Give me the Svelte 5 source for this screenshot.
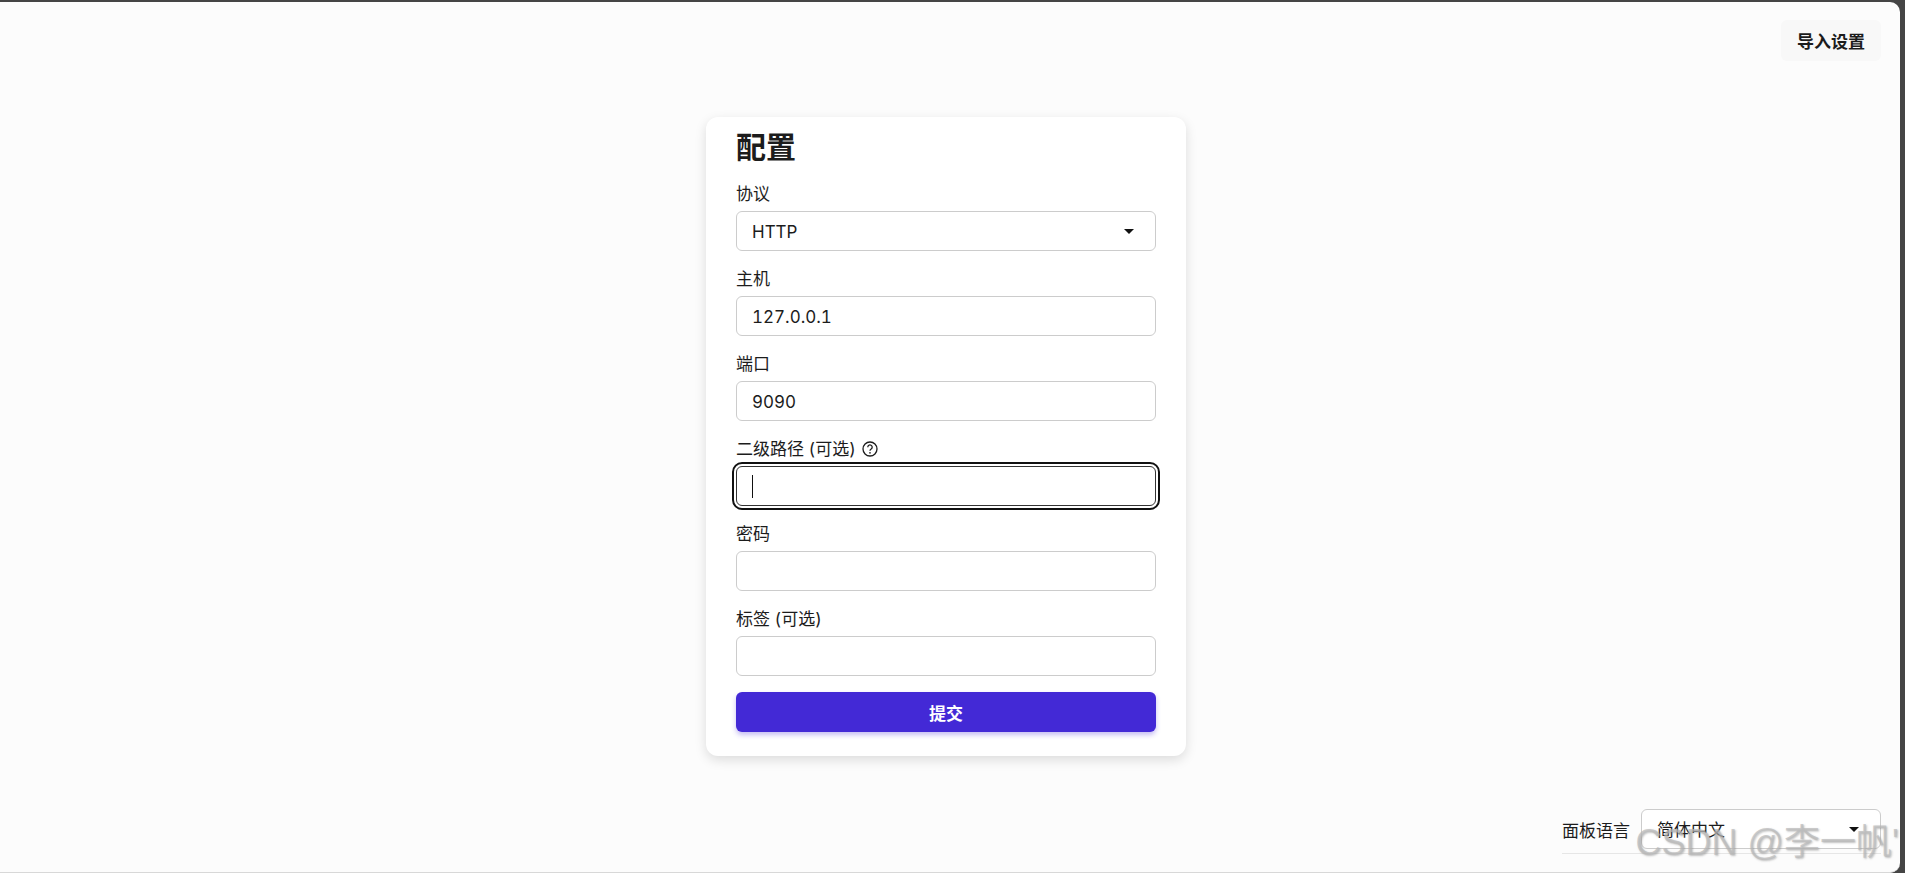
<script lang="ts">
  const fields = [
    { label: '主机', value: '127.0.0.1' },
    { label: '端口', value: '9090' }
  ]
</script>

<div class="frame">
  <div class="page">
    <header>
      <button class="import">导入设置</button>
    </header>

    <main>
      <form class="card" onsubmit={(e) => e.preventDefault()}>
        <h2>配置</h2>

        <div class="field">
          <span class="label">协议</span>
          <div class="select">
            <span>HTTP</span>
            <i class="caret"></i>
          </div>
        </div>

        {#each fields as f}
          <div class="field">
            <span class="label">{f.label}</span>
            <div class="input">{f.value}</div>
          </div>
        {/each}

        <div class="field">
          <span class="label"><span>二级路径 (可选)</span><svg class="help" width="16" height="16" viewBox="0 0 16 16" fill="none" stroke="currentColor">
              <circle cx="8" cy="8" r="7" stroke-width="1.3" />
              <path d="M5.8 6.2a2.2 2.2 0 1 1 3.4 1.8c-.8.5-1.2.9-1.2 1.8" stroke-width="1.3" />
              <circle cx="8" cy="11.8" r=".85" fill="currentColor" stroke="none" />
            </svg></span>
          <div class="input focused"><i class="cursor"></i></div>
        </div>

        <div class="field">
          <span class="label">密码</span>
          <div class="input"></div>
        </div>

        <div class="field">
          <span class="label">标签 (可选)</span>
          <div class="input"></div>
        </div>

        <button class="submit" type="submit">提交</button>
      </form>
    </main>

    <footer>
      <div class="lang">
        <span>面板语言</span>
        <div class="select">
          <span>简体中文</span>
          <i class="caret"></i>
        </div>
      </div>
    </footer>

    <div class="watermark">CSDN @李一帆'</div>
  </div>
</div>

<style>
  :global(body) {
    background: #454545;
    overflow: hidden;
  }

  .frame {
    height: 873px;
    padding: 2px 5px 0 0;
    box-sizing: border-box;
    font-family: Inter, "Noto Sans CJK SC", sans-serif;
    font-size: 17px;
    font-feature-settings: "tnum";
    color: #1c1c1c;
  }

  .page {
    position: relative;
    height: 100%;
    box-sizing: border-box;
    background: #fcfcfc;
    border-bottom: 1px solid #d8d8d8;
    border-top-right-radius: 10px;
    border-bottom-right-radius: 10px;
    display: flex;
    flex-direction: column;
    overflow: hidden;
  }

  header {
    display: flex;
    justify-content: flex-end;
    padding: 18px 19px 0 0;
  }

  .import {
    width: 100px;
    height: 41px;
    border: none;
    border-radius: 6px;
    background: #f8f8f8;
    color: #1c1c1c;
    font: inherit;
    font-weight: 700;
  }

  main {
    padding: 56px 0 0 706px;
  }

  .card {
    width: 480px;
    height: 639px;
    box-sizing: border-box;
    padding: 0 30px;
    background: #fff;
    border-radius: 12px;
    box-shadow: 0 4px 12px rgba(0, 0, 0, 0.13);
  }

  h2 {
    margin: 0;
    height: 60px;
    font-size: 30px;
    line-height: 60px;
    font-weight: 700;
  }

  .field {
    display: flex;
    flex-direction: column;
    height: 85px;
  }

  .label {
    display: flex;
    align-items: center;
    gap: 6px;
    height: 34px;
    line-height: 34px;
  }

  .help {
    color: #1c1c1c;
  }

  .input, .select {
    height: 40px;
    box-sizing: border-box;
    border: 1px solid #ccc;
    border-radius: 6px;
    background: #fff;
    padding: 1px 15px 0;
    line-height: 38px;
  }

  .select {
    display: flex;
    align-items: center;
    justify-content: space-between;
  }

  .caret {
    width: 0;
    height: 0;
    margin-right: 6px;
    border-left: 5px solid transparent;
    border-right: 5px solid transparent;
    border-top: 5px solid #111;
  }

  .focused {
    outline: 2px solid #111;
    outline-offset: 2px;
    border-color: #333;
    display: flex;
    align-items: center;
  }

  .cursor {
    width: 1px;
    height: 23px;
    background: #111;
  }

  .submit {
    display: block;
    width: 100%;
    height: 40px;
    margin-top: 5px;
    border: none;
    border-radius: 6px;
    background: #4329d6;
    color: #fff;
    font: inherit;
    font-weight: 700;
    box-shadow: 0 3px 5px rgba(67, 41, 214, 0.3);
  }

  footer {
    margin-top: auto;
    display: flex;
    justify-content: flex-end;
    padding: 0 19px 18px 0;
  }

  .lang {
    display: flex;
    align-items: center;
    gap: 11px;
    padding-bottom: 4px;
    border-bottom: 1px solid #e6e6e6;
  }

  .lang .select {
    width: 240px;
  }

  .watermark {
    position: absolute;
    right: 1px;
    bottom: 9px;
    font-family: "Liberation Sans", "Noto Sans CJK SC", sans-serif;
    font-size: 36px;
    line-height: 40px;
    color: rgba(185, 185, 185, 0.7);
    text-shadow: 1px 1px 2px rgba(120, 120, 120, 0.45);
    white-space: nowrap;
  }
</style>
